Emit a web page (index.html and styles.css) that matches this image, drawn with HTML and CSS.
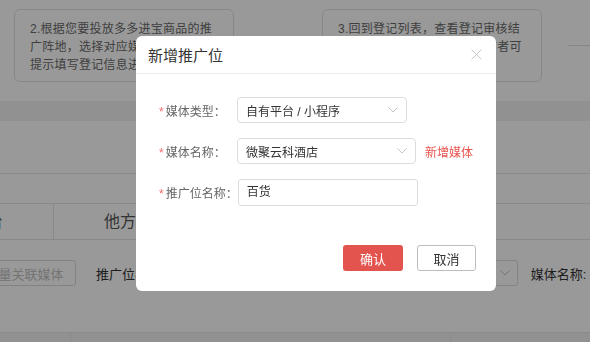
FILE: index.html
```html
<!DOCTYPE html>
<html>
  <head>
    <title>新增推广位</title>
    <link rel="stylesheet" href="styles.css">
  </head>
  <body>
    <div class="page">
      <div class="steps">
        <div class="step-card">2.根据您要投放多多进宝商品的推<br>广阵地，选择对应媒体类型，按照<br>提示填写登记信息进行登记</div>
        <div class="step-card">3.回到登记列表，查看登记审核结<br>果，审核通过后推广位，推广者可<br>进行推广</div>
        <div class="step-line"></div>
      </div>
      <div class="gap-band"></div>
      <div class="section-top"></div>
      <div class="tabs">
        <div class="tab">自有平台</div>
        <div class="tab">他方平台</div>
      </div>
      <div class="filters">
        <button class="btn-ghost">批量关联媒体</button>
        <span class="filter-label">推广位名称:</span>
        <div class="filter-input"></div>
        <div class="filter-select">
          <svg width="10" height="6" viewBox="0 0 10 6"><polyline points="0.5,0.5 5,5 9.5,0.5" fill="none" stroke="#c0c4cc" stroke-width="1"/></svg>
        </div>
        <span class="filter-label media">媒体名称:</span>
      </div>
      <div class="table-head">
        <div class="th th-first"></div>
        <div class="th th-mid"></div>
        <div class="th"></div>
      </div>
    </div>

    <div class="mask">
      <div class="dialog">
        <div class="dialog-header">
          <span class="dialog-title">新增推广位</span>
          <svg class="dialog-close" width="11" height="11" viewBox="0 0 11 11">
            <line x1="0.5" y1="0.5" x2="10.5" y2="10.5" stroke="#c8c8c8" stroke-width="1"/>
            <line x1="10.5" y1="0.5" x2="0.5" y2="10.5" stroke="#c8c8c8" stroke-width="1"/>
          </svg>
        </div>
        <div class="dialog-body">
          <div class="form-row">
            <label class="form-label"><span class="req">*</span>媒体类型：</label>
            <div class="select select-type">
              <span>自有平台 / 小程序</span>
              <svg width="10" height="6" viewBox="0 0 10 6"><polyline points="0.5,0.5 5,5 9.5,0.5" fill="none" stroke="#c0c4cc" stroke-width="1"/></svg>
            </div>
          </div>
          <div class="form-row">
            <label class="form-label"><span class="req">*</span>媒体名称：</label>
            <div class="select select-name">
              <span>微聚云科酒店</span>
              <svg width="10" height="6" viewBox="0 0 10 6"><polyline points="0.5,0.5 5,5 9.5,0.5" fill="none" stroke="#c0c4cc" stroke-width="1"/></svg>
            </div>
            <a class="link-add">新增媒体</a>
          </div>
          <div class="form-row">
            <label class="form-label"><span class="req">*</span>推广位名称：</label>
            <div class="input">百货</div>
          </div>
        </div>
        <div class="dialog-footer">
          <button class="btn btn-primary">确认</button>
          <button class="btn btn-default">取消</button>
        </div>
      </div>
    </div>
  </body>
</html>
```

FILE: styles.css
```css
:root {
  --red: #e4544f;
  --border: #dcdcdc;
  --line: #e6e6e6;
  --text: #333333;
  --text-label: #666666;
}

body {
  margin: 0;
  width: 590px;
  height: 342px;
  overflow: hidden;
  background: #ffffff;
  font-family: "Liberation Sans", "Noto Sans CJK SC", sans-serif;
  color: var(--text);
}

/* page under the mask */
.page {
  width: 590px;
}

.steps {
  height: 101px;
  box-sizing: border-box;
  padding: 9px 0 0 14px;
  display: flex;
  align-items: flex-start;
}

.step-card {
  width: 220px;
  height: 73px;
  box-sizing: border-box;
  padding: 10px 0 0 15px;
  border: 1px solid #e2e2e2;
  border-radius: 6px;
  font-size: 12px;
  letter-spacing: 0.25px;
  line-height: 18px;
  color: #6a6a6a;
  white-space: nowrap;
  overflow: hidden;
}

.step-card + .step-card {
  margin-left: 88px;
}

.step-line {
  margin: 36px 0 0 26px;
  flex: 1;
  height: 1px;
  background: #e0e0e0;
}

.gap-band {
  height: 20px;
  background: #f2f2f2;
}

.section-top {
  height: 52px;
  border-bottom: 1px solid var(--line);
}

.tabs {
  margin: 29px 0 0 -111px;
  display: flex;
  height: 35px;
  border-top: 1px solid #e4e4e4;
  border-bottom: 1px solid #e4e4e4;
}

.tab {
  width: 164px;
  line-height: 35px;
  text-align: center;
  font-size: 16px;
  color: #555555;
}

.tab + .tab {
  border-left: 1px solid #e4e4e4;
}

.filters {
  margin: 20px 0 0 -27px;
  height: 26px;
  display: flex;
  align-items: center;
}

.btn-ghost {
  width: 103px;
  height: 26px;
  padding: 0;
  border: 1px solid #d9d9d9;
  border-radius: 3px;
  background: #ffffff;
  color: #c2c2c2;
  font-family: inherit;
  font-size: 13px;
}

.filter-label {
  margin-left: 20px;
  font-size: 13px;
  color: var(--text);
  white-space: nowrap;
}

.filter-label.media {
  margin-left: 13px;
}

.filter-input {
  margin-left: 10px;
  width: 220px;
  height: 24px;
  border: 1px solid var(--border);
  border-radius: 3px;
}

.filter-select {
  margin-left: 14px;
  width: 98px;
  height: 24px;
  border: 1px solid var(--border);
  border-radius: 3px;
  display: flex;
  align-items: center;
  justify-content: flex-end;
  padding-right: 7px;
  box-sizing: content-box;
}

.table-head {
  margin-top: 46px;
  height: 9px;
  display: flex;
  background: #f2f2f2;
  border-top: 1px solid var(--line);
}

.th {
  flex: 1;
}

.th-first {
  flex: none;
  width: 70px;
  border-right: 1px solid var(--line);
}

.th-mid {
  flex: none;
  width: 379px;
  border-right: 1px solid var(--line);
}

/* modal */
.mask {
  position: fixed;
  inset: 0;
  background: rgba(0, 0, 0, 0.4);
}

.dialog {
  position: absolute;
  left: 136px;
  top: 36px;
  width: 360px;
  height: 255px;
  background: #ffffff;
  border-radius: 6px;
  display: flex;
  flex-direction: column;
}

.dialog-header {
  height: 37px;
  padding: 0 14px 0 12px;
  border-bottom: 1px solid #ebebeb;
  display: flex;
  align-items: center;
  justify-content: space-between;
}

.dialog-title {
  font-size: 15px;
  color: var(--text);
}

.dialog-body {
  padding: 23px 0 0 23px;
  display: flex;
  flex-direction: column;
  gap: 15px;
}

.form-row {
  display: flex;
  align-items: center;
  height: 26px;
}

.form-label {
  min-width: 78px;
  font-size: 12px;
  color: var(--text-label);
  white-space: nowrap;
}

.req {
  color: #f56c6c;
  margin-right: 2px;
}

.select {
  height: 24px;
  box-sizing: content-box;
  border: 1px solid var(--border);
  border-radius: 4px;
  padding: 0 8px;
  display: flex;
  align-items: center;
  justify-content: space-between;
  font-size: 12px;
  color: var(--text);
}

.select-type {
  width: 152px;
}

.select-name {
  width: 161px;
}

.link-add {
  margin-left: 9px;
  font-size: 12px;
  color: #e8534e;
}

.input {
  width: 162px;
  height: 25px;
  line-height: 25px;
  border: 1px solid var(--border);
  border-radius: 3px;
  padding: 0 8px;
  font-size: 12px;
  color: var(--text);
}

.dialog-footer {
  margin-top: auto;
  padding: 0 20px 20px 0;
  display: flex;
  justify-content: flex-end;
  gap: 14px;
}

.btn {
  height: 26px;
  padding: 0;
  border-radius: 3px;
  font-family: inherit;
  font-size: 13px;
  cursor: pointer;
}

.btn-primary {
  width: 60px;
  border: none;
  background: var(--red);
  color: #ffffff;
}

.btn-default {
  width: 59px;
  border: 1px solid #bdbdbd;
  background: #ffffff;
  color: var(--text);
}
```
